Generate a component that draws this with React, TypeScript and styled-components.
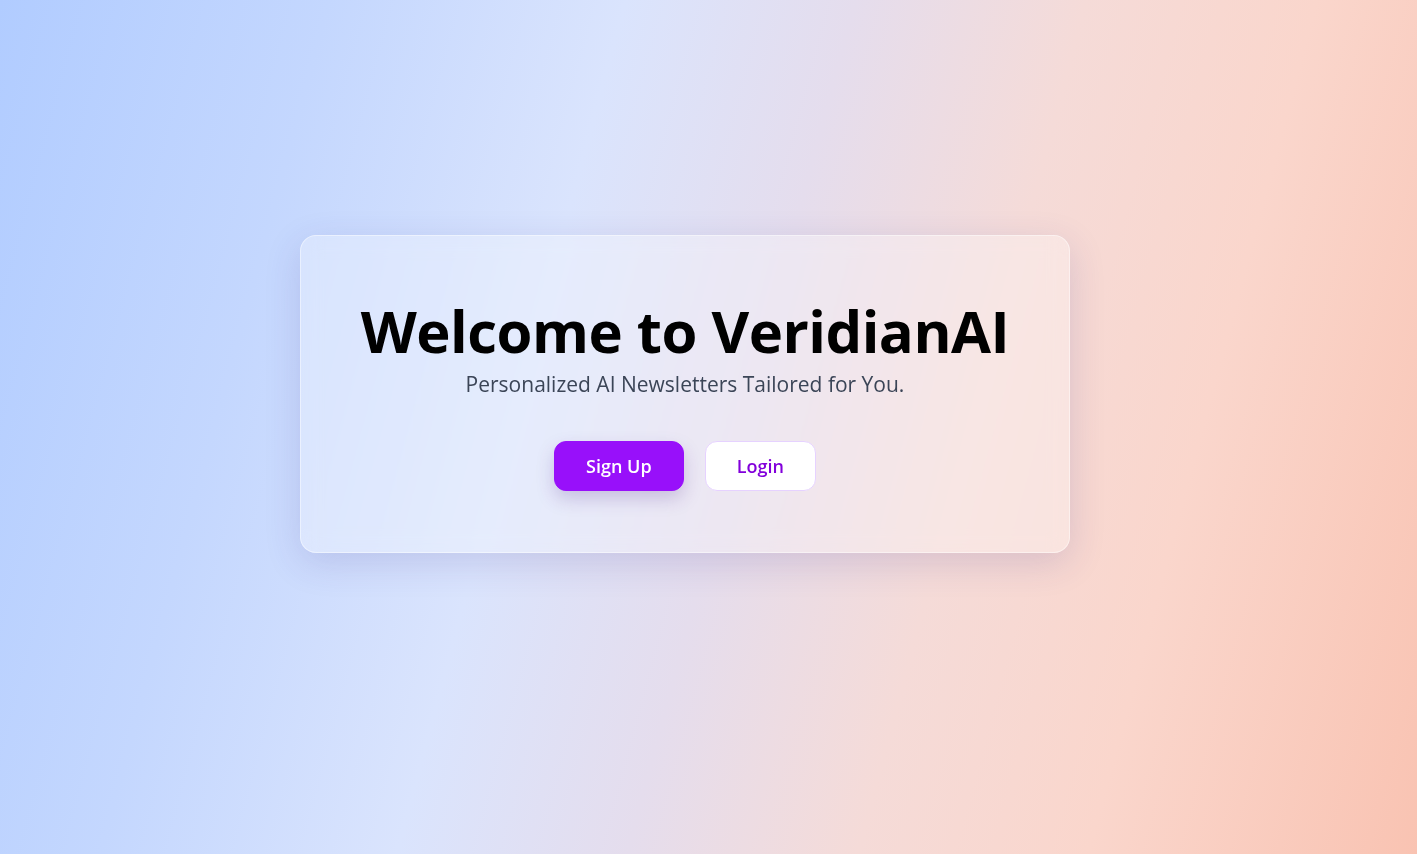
import React from "react";
import styled, { createGlobalStyle } from "styled-components";

const GlobalStyle = createGlobalStyle`
  html, body { margin: 0; padding: 0; }
  body {
    font-family: "Open Sans", "Noto Sans", Arial, sans-serif;
    -webkit-font-smoothing: antialiased;
  }
  * { box-sizing: border-box; }
`;

const Page = styled.main`
  min-height: 100vh;
  width: 100%;
  display: flex;
  align-items: center;
  justify-content: center;
  padding: 0 47px 66px 0;
  background: linear-gradient(
    105deg,
    #b1ccff 0%,
    #c4d7fe 20%,
    #dae4fd 38%,
    #e5dded 52%,
    #f5dbd8 66%,
    #fad6cc 80%,
    #f9c3b2 100%
  );
`;

const Card = styled.section`
  width: 770px;
  height: 318px;
  border-radius: 16px;
  background: rgba(255, 255, 255, 0.3);
  border: 1px solid rgba(255, 255, 255, 0.45);
  box-shadow: 0 10px 36px rgba(60, 50, 140, 0.16);
  backdrop-filter: blur(10px);
  display: flex;
  flex-direction: column;
  align-items: center;
  padding-top: 63px;
`;

const Title = styled.h1`
  margin: 0;
  font-size: 58px;
  line-height: 64px;
  font-weight: 700;
  color: #000;
  letter-spacing: -0.5px;
`;

const Subtitle = styled.p`
  margin: 7px 0 0;
  font-size: 21px;
  line-height: 28px;
  color: #3b4557;
`;

const Actions = styled.div`
  display: flex;
  gap: 21px;
  margin-top: 43px;
  align-items: center;
`;

const Button = styled.button<{ $primary?: boolean }>`
  height: 50px;
  padding: 0 31px;
  border-radius: 12px;
  font-family: inherit;
  font-size: 18px;
  font-weight: 600;
  cursor: pointer;
  border: 1px solid ${(p) => (p.$primary ? "#9810fa" : "#e6d2ff")};
  background: ${(p) => (p.$primary ? "#9810fa" : "#ffffff")};
  color: ${(p) => (p.$primary ? "#ffffff" : "#8200db")};
  box-shadow: ${(p) =>
    p.$primary ? "0 8px 18px rgba(80, 40, 140, 0.22)" : "none"};
`;

export default function App() {
  return (
    <>
      <GlobalStyle />
      <Page>
        <Card>
          <Title>Welcome to VeridianAI</Title>
          <Subtitle>Personalized AI Newsletters Tailored for You.</Subtitle>
          <Actions>
            <Button $primary>Sign Up</Button>
            <Button>Login</Button>
          </Actions>
        </Card>
      </Page>
    </>
  );
}
